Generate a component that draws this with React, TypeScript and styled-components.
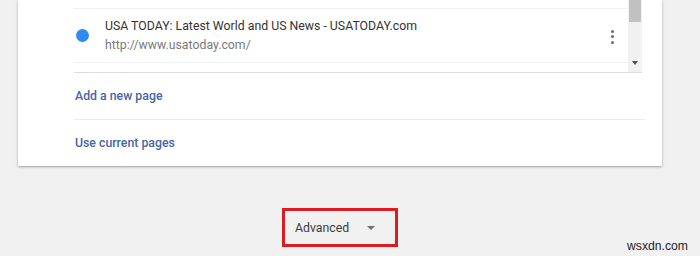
import React from "react";
import styled, { createGlobalStyle } from "styled-components";

const Global = createGlobalStyle`
  html, body { margin: 0; padding: 0; background: #f1f1f1; overflow: hidden; }
  body { font-family: Roboto, "Noto Sans", "Liberation Sans", sans-serif; width: 700px; height: 256px; position: relative; }
`;

const Page = styled.div`
  display: flex;
  flex-direction: column;
  width: 700px;
  height: 256px;
`;

const Card = styled.section`
  margin: 0 38px 0 18px;
  background: #fff;
  box-shadow: 0 1px 2px rgba(0, 0, 0, 0.28), 0 1px 4px rgba(0, 0, 0, 0.08);
  padding: 0 20px 0 56px;
  display: flex;
  flex-direction: column;
`;

const ListBox = styled.div`
  display: flex;
  height: 72px;
  border-bottom: 1px solid #dcdcdc;
`;

const ListColumn = styled.div`
  flex: 1;
  display: flex;
  flex-direction: column;
`;

const PartialRow = styled.div`
  height: 8px;
  border-bottom: 1px solid #f0f0f0;
`;

const Row = styled.div`
  height: 53px;
  border-bottom: 1px solid #f0f0f0;
  display: flex;
  align-items: center;
  padding: 0 14px 0 2px;
`;

const Dot = styled.span`
  width: 13px;
  height: 13px;
  border-radius: 50%;
  background: #2d8cf0;
  flex: none;
`;

const Texts = styled.div`
  flex: 1;
  margin-left: 16px;
  display: flex;
  flex-direction: column;
  gap: 3px;
`;

const Title = styled.div`
  font-size: 12.3px;
  color: #333;
  line-height: 16px;
`;

const Url = styled.div`
  font-size: 12.3px;
  color: #7a7a7a;
  line-height: 16px;
`;

const Kebab = styled.div`
  display: flex;
  flex-direction: column;
  gap: 2.5px;
  margin-top: 2px;
`;

const KDot = styled.span`
  width: 3px;
  height: 3px;
  border-radius: 50%;
  background: #6b6b6b;
`;

const Scrollbar = styled.div`
  width: 14px;
  background: #f1f1f1;
  display: flex;
  flex-direction: column;
  justify-content: space-between;
  align-items: center;
`;

const Thumb = styled.div`
  width: 12px;
  height: 22px;
  background: #c1c1c1;
`;

const ScrollArrow = styled.div`
  width: 0;
  height: 0;
  border-left: 3.5px solid transparent;
  border-right: 3.5px solid transparent;
  border-top: 4px solid #505050;
  margin-bottom: 7px;
`;

const LinkRow = styled.div<{ $last?: boolean }>`
  height: 46px;
  display: flex;
  align-items: center;
  border-bottom: ${(p) => (p.$last ? "none" : "1px solid #ececec")};
  margin-right: ${(p) => (p.$last ? "0" : "-3px")};
`;

const Link = styled.span`
  font-size: 12.3px;
  font-weight: 500;
  color: #4864a6;
  margin-left: 1px;
`;

const Footer = styled.div`
  margin: 42px 38px 0 18px;
  display: flex;
  justify-content: center;
`;

const AdvancedBox = styled.div`
  width: 110px;
  height: 33px;
  border: 3px solid #df1b22;
  display: flex;
  align-items: center;
  box-sizing: content-box;
`;

const AdvancedLabel = styled.span`
  font-size: 12.3px;
  color: #3c3c3c;
  margin-left: 10px;
  flex: 1;
`;

const Caret = styled.span`
  width: 0;
  height: 0;
  border-left: 4.5px solid transparent;
  border-right: 4.5px solid transparent;
  border-top: 4.5px solid #707070;
  margin-right: 20px;
`;

const Watermark = styled.div`
  position: absolute;
  left: 627px;
  top: 239px;
  font-family: "Liberation Sans", Arial, sans-serif;
  font-size: 12.2px;
  line-height: 14px;
  color: #1e1e1e;
  white-space: nowrap;
`;

export default function App() {
  return (
    <>
      <Global />
      <Page>
        <Card>
          <ListBox>
            <ListColumn>
              <PartialRow />
              <Row>
                <Dot />
                <Texts>
                  <Title>USA TODAY: Latest World and US News - USATODAY.com</Title>
                  <Url>http://www.usatoday.com/</Url>
                </Texts>
                <Kebab>
                  <KDot />
                  <KDot />
                  <KDot />
                </Kebab>
              </Row>
            </ListColumn>
            <Scrollbar>
              <Thumb />
              <ScrollArrow />
            </Scrollbar>
          </ListBox>
          <LinkRow>
            <Link>Add a new page</Link>
          </LinkRow>
          <LinkRow $last>
            <Link>Use current pages</Link>
          </LinkRow>
        </Card>
        <Footer>
          <AdvancedBox>
            <AdvancedLabel>Advanced</AdvancedLabel>
            <Caret />
          </AdvancedBox>
        </Footer>
      </Page>
      <Watermark>wsxdn.com</Watermark>
    </>
  );
}
